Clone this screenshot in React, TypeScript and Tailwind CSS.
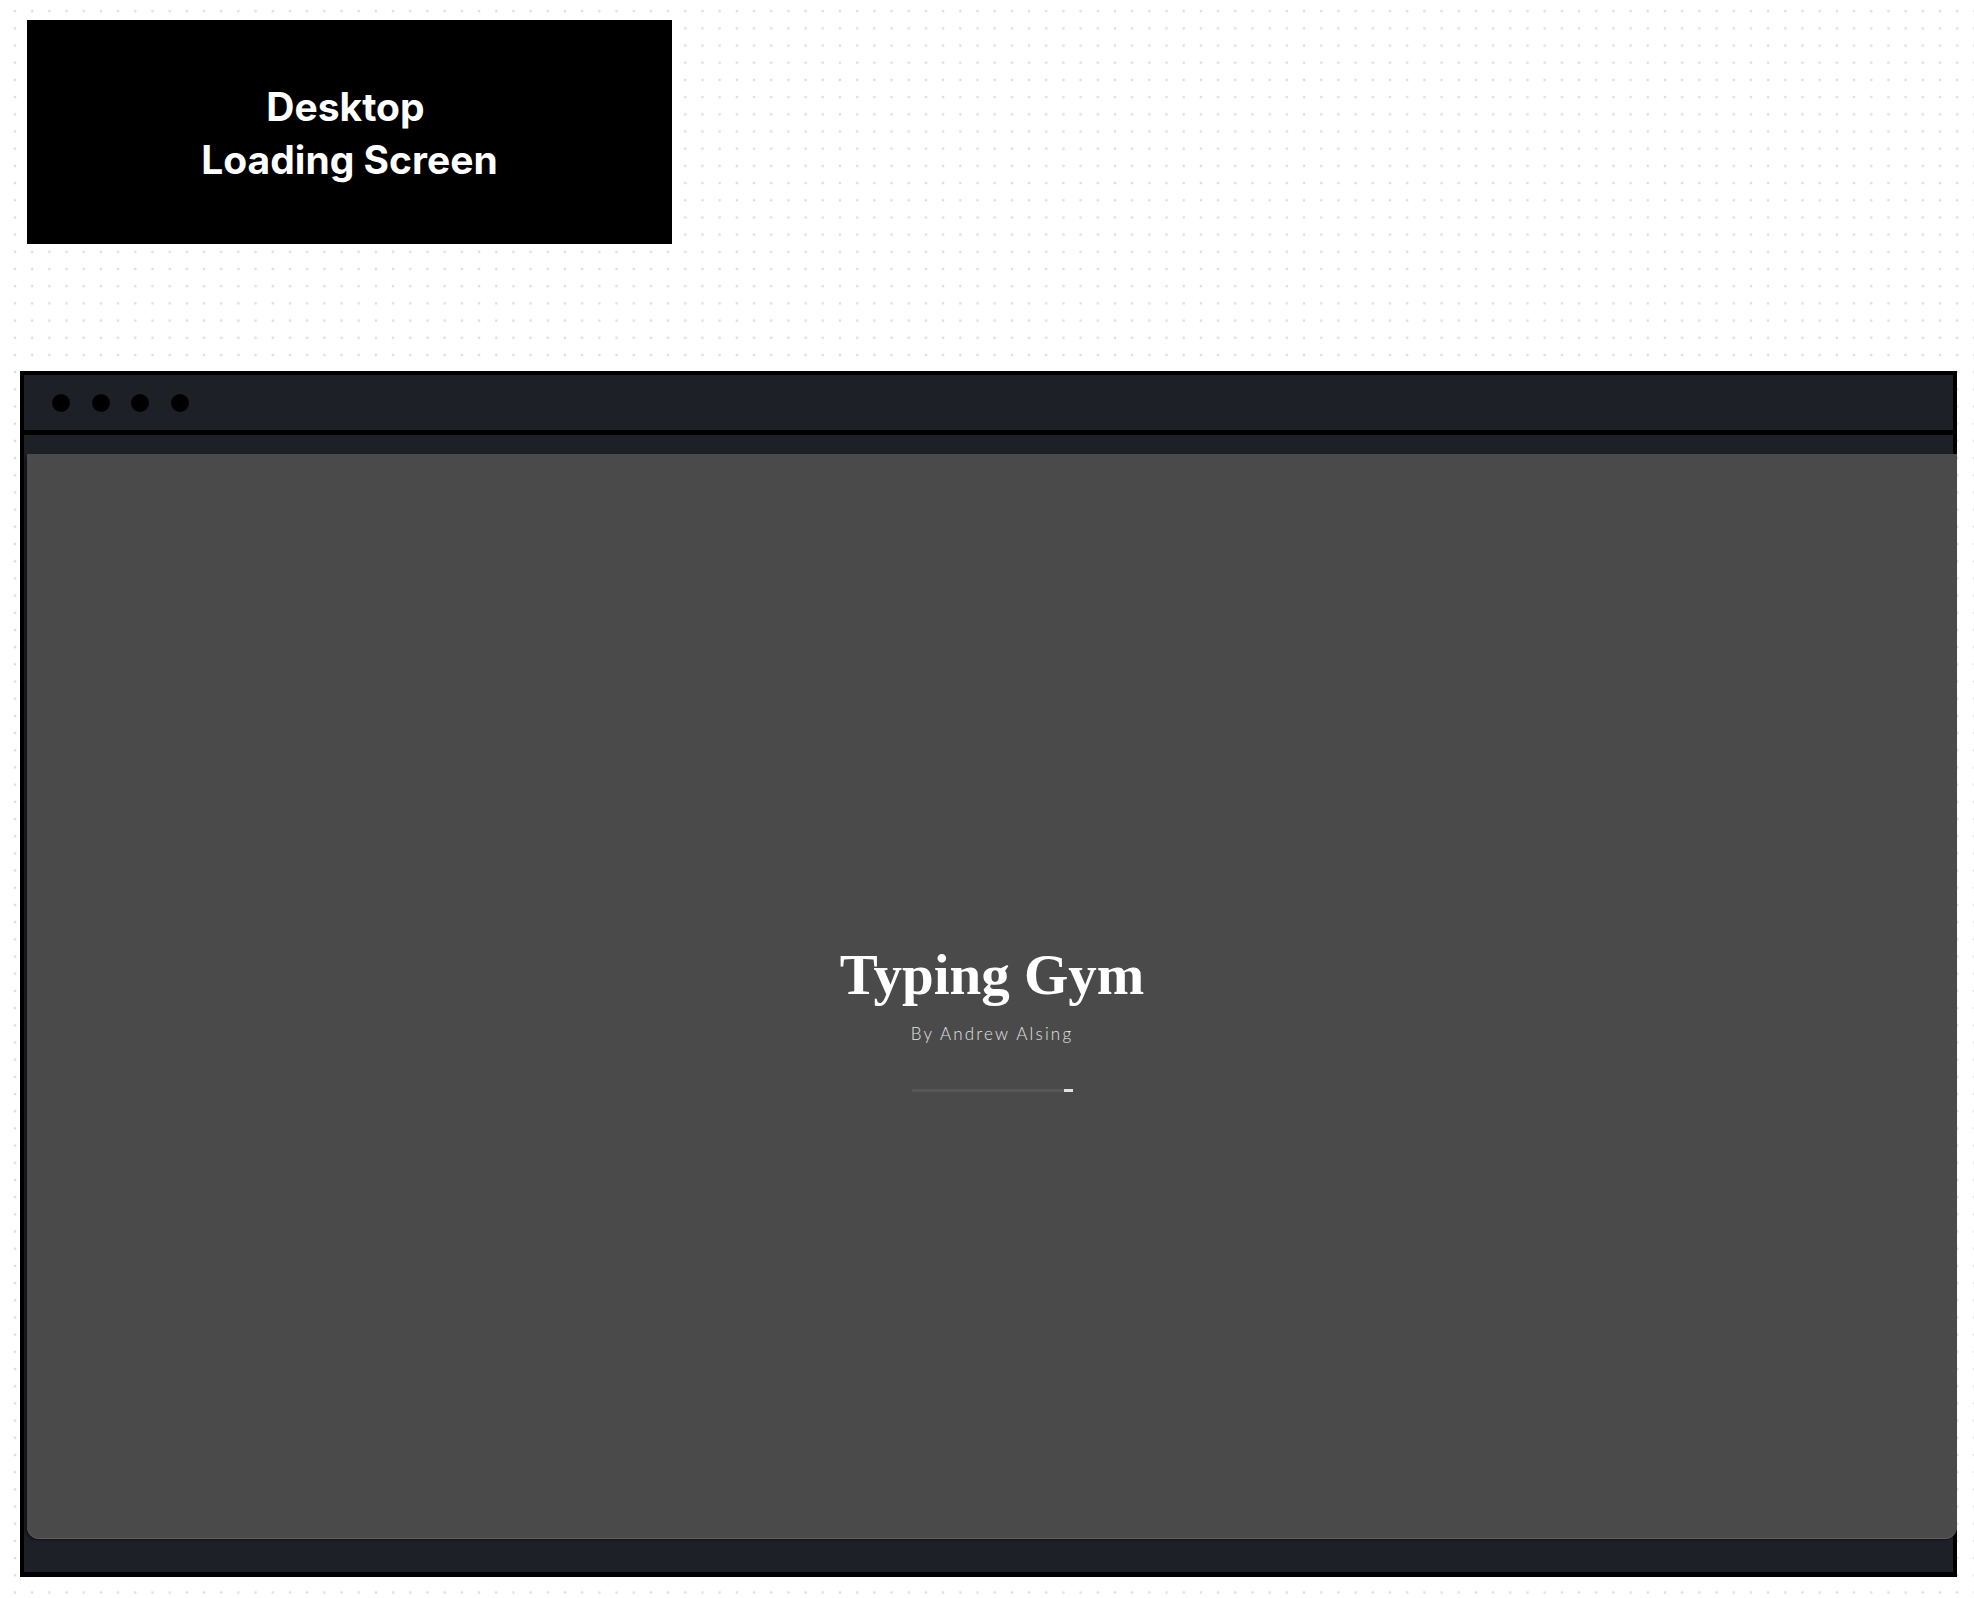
const dots = [0, 1, 2, 3];

function LoadingBar() {
  return (
    <div className="relative mt-[47px] h-[3px] w-[161px] bg-[#575757]">
      <div className="absolute right-0 top-0 h-[3px] w-[9px] bg-[#e2e2e2]" />
    </div>
  );
}

export default function App() {
  return (
    <div className="relative h-[1598px] w-[1974px] overflow-hidden bg-white bg-[radial-gradient(circle,#dddde5_1.2px,transparent_1.6px)] bg-[size:17.2px_17.2px] bg-[position:6.4px_2.6px] pt-[20px]">
      {/* board label */}
      <div className="ml-[27px] flex h-[224px] w-[645px] flex-col items-center justify-center bg-black pt-[2px] font-['Inter','Liberation_Sans',sans-serif] text-[39px] font-bold leading-[53px] text-white">
        <span className="pr-[8px]">Desktop</span>
        <span>Loading Screen</span>
      </div>

      {/* browser frame */}
      <div className="ml-[20px] mt-[127px] flex h-[1206px] w-[1937px] flex-col border-4 border-b-[5px] border-black bg-[#1e2027]">
        <div className="flex h-[60px] shrink-0 items-center gap-[21.5px] border-b-[5px] border-black pl-[28px]">
          {dots.map((d) => (
            <span key={d} className="h-[18px] w-[18px] rounded-full bg-black" />
          ))}
        </div>

        <div className="pl-[3px] pt-[19px]">
          <div className="flex h-[1084px] w-[1930px] flex-col items-center justify-center rounded-b-[12px] bg-[#4a4a4a] pt-[46px] shadow-[0_1px_0_#5f5f5f,-2px_2px_3px_rgba(0,0,0,0.45)]">
            <h1 className="font-['Liberation_Serif','Times_New_Roman',serif] text-[57px] font-bold leading-[56px] text-white">
              Typing Gym
            </h1>
            <p className="mt-[22px] font-['Lato','Open_Sans',sans-serif] text-[17px] font-light leading-[17px] tracking-[2.2px] text-[#e2e2e2]">
              By Andrew Alsing
            </p>
            <LoadingBar />
          </div>
        </div>
      </div>
    </div>
  );
}
